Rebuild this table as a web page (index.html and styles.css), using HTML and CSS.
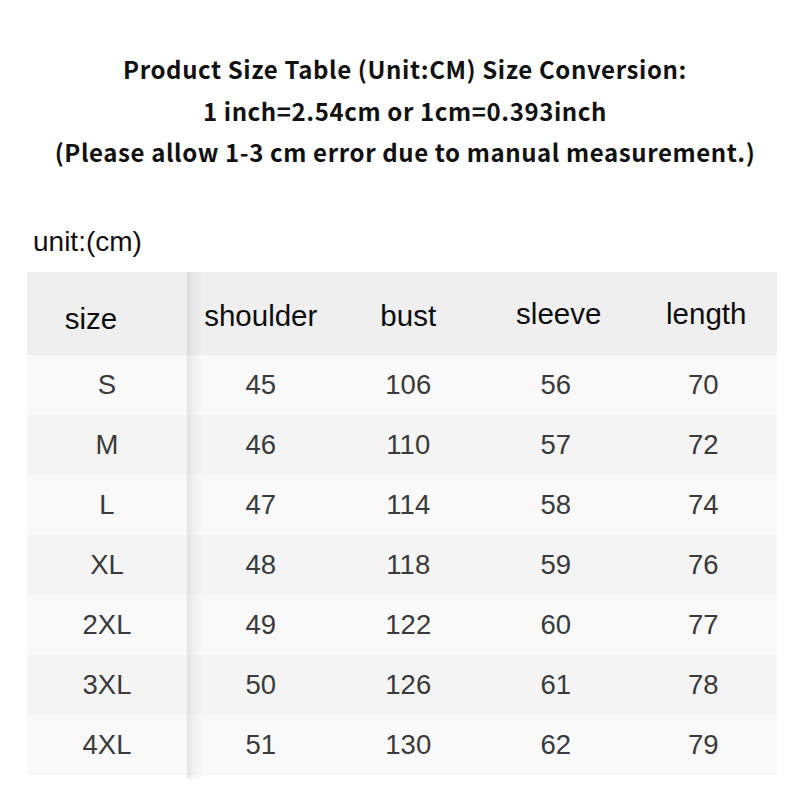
FILE: index.html
```html
<!DOCTYPE html>
<html>
<head>
<meta charset="utf-8">
<link rel="stylesheet" href="styles.css">
</head>
<body>
<div class="page">
  <div class="title">
    <div class="line">Product Size Table (Unit:CM) Size Conversion:</div>
    <div class="line">1 inch=2.54cm or 1cm=0.393inch</div>
    <div class="line">(Please allow 1-3 cm error due to manual measurement.)</div>
  </div>
  <div class="unit">unit:(cm)</div>
  <div class="sheet">
    <div class="row head">
      <div class="cell c-size">size</div>
      <div class="cell">shoulder</div>
      <div class="cell">bust</div>
      <div class="cell up">sleeve</div>
      <div class="cell up">length</div>
    </div>
    <div class="row light"><div class="cell">S</div><div class="cell">45</div><div class="cell">106</div><div class="cell">56</div><div class="cell">70</div></div>
    <div class="row dark"><div class="cell">M</div><div class="cell">46</div><div class="cell">110</div><div class="cell">57</div><div class="cell">72</div></div>
    <div class="row light"><div class="cell">L</div><div class="cell">47</div><div class="cell">114</div><div class="cell">58</div><div class="cell">74</div></div>
    <div class="row dark"><div class="cell">XL</div><div class="cell">48</div><div class="cell">118</div><div class="cell">59</div><div class="cell">76</div></div>
    <div class="row light"><div class="cell">2XL</div><div class="cell">49</div><div class="cell">122</div><div class="cell">60</div><div class="cell">77</div></div>
    <div class="row dark"><div class="cell">3XL</div><div class="cell">50</div><div class="cell">126</div><div class="cell">61</div><div class="cell">78</div></div>
    <div class="row light"><div class="cell">4XL</div><div class="cell">51</div><div class="cell">130</div><div class="cell">62</div><div class="cell">79</div></div>
    <div class="divider"></div>
  </div>
</div>
</body>
</html>
```

FILE: styles.css
```css
html, body {
  margin: 0;
  padding: 0;
  background: #ffffff;
}

.page {
  width: 800px;
  height: 800px;
  padding-top: 48px;
  box-sizing: border-box;
}

.title {
  font-family: "Noto Sans CJK SC", "Noto Sans", sans-serif;
  font-weight: 700;
  font-size: 24px;
  letter-spacing: 0.6px;
  line-height: 41.5px;
  color: #111111;
  text-align: center;
  padding-left: 10px;
}

.title .line {
  height: 41.5px;
  white-space: nowrap;
}

.unit {
  font-family: "Liberation Sans", Arial, sans-serif;
  font-size: 28px;
  color: #111111;
  margin-top: 53px;
  padding-left: 33px;
  line-height: 32px;
}

.sheet {
  margin: 14px 0 0 27px;
  width: 750px;
  display: grid;
  grid-template-columns: 160px repeat(4, 1fr);
  grid-template-rows: 83px repeat(7, 60px);
  font-family: "Liberation Sans", Arial, sans-serif;
}

.row {
  display: contents;
}

.row:nth-child(1) > .cell { grid-row: 1; }
.row:nth-child(2) > .cell { grid-row: 2; }
.row:nth-child(3) > .cell { grid-row: 3; }
.row:nth-child(4) > .cell { grid-row: 4; }
.row:nth-child(5) > .cell { grid-row: 5; }
.row:nth-child(6) > .cell { grid-row: 6; }
.row:nth-child(7) > .cell { grid-row: 7; }
.row:nth-child(8) > .cell { grid-row: 8; }

.cell:nth-child(1) { grid-column: 1; }
.cell:nth-child(2) { grid-column: 2; }
.cell:nth-child(3) { grid-column: 3; }
.cell:nth-child(4) { grid-column: 4; }
.cell:nth-child(5) { grid-column: 5; }

.cell {
  display: flex;
  align-items: center;
  justify-content: center;
  font-size: 27.5px;
  color: #3a3a3a;
  padding-top: 1px;
}

.head .cell {
  background: #efefef;
  color: #0d0d0d;
  font-size: 29.5px;
  padding-top: 6px;
  padding-bottom: 0;
}

.head .cell.c-size {
  padding-right: 32px;
  padding-top: 12px;
}

.head .cell.up {
  padding-top: 2px;
  padding-left: 6px;
}

.light .cell {
  background: #f9f9f9;
}

.dark .cell {
  background: #f4f4f5;
}

.divider {
  grid-column: 2;
  grid-row: 1 / -1;
  width: 16px;
  margin-bottom: -4px;
  background: linear-gradient(to right, rgba(0, 0, 0, 0.09), rgba(0, 0, 0, 0.035) 6px, rgba(0, 0, 0, 0));
  pointer-events: none;
}
```
